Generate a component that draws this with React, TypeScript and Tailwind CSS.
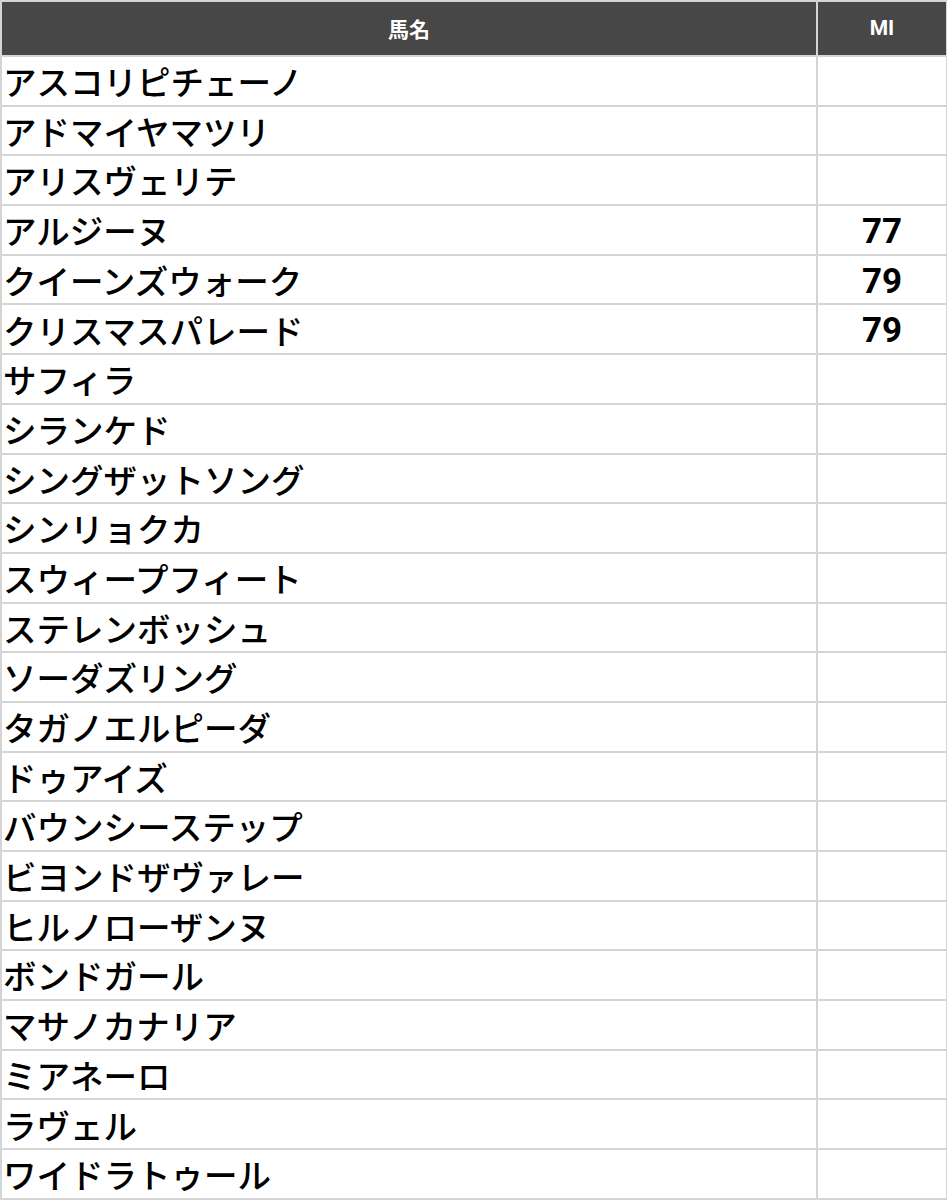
const rows: [string, string][] = [
  ["アスコリピチェーノ", ""],
  ["アドマイヤマツリ", ""],
  ["アリスヴェリテ", ""],
  ["アルジーヌ", "77"],
  ["クイーンズウォーク", "79"],
  ["クリスマスパレード", "79"],
  ["サフィラ", ""],
  ["シランケド", ""],
  ["シングザットソング", ""],
  ["シンリョクカ", ""],
  ["スウィープフィート", ""],
  ["ステレンボッシュ", ""],
  ["ソーダズリング", ""],
  ["タガノエルピーダ", ""],
  ["ドゥアイズ", ""],
  ["バウンシーステップ", ""],
  ["ビヨンドザヴァレー", ""],
  ["ヒルノローザンヌ", ""],
  ["ボンドガール", ""],
  ["マサノカナリア", ""],
  ["ミアネーロ", ""],
  ["ラヴェル", ""],
  ["ワイドラトゥール", ""],
];

export default function App() {
  return (
    <div className="w-[947px] bg-white font-[family-name:'Noto_Sans_CJK_JP',sans-serif]">
      <table className="w-[946px] table-fixed border-collapse">
        <colgroup>
          <col className="w-[816px]" />
          <col className="w-[130px]" />
        </colgroup>
        <thead>
          <tr className="h-[55px] bg-[#474747] text-white">
            <th className="border-2 border-[#d4d4d4] text-center text-[21px] font-bold">馬名</th>
            <th className="border-2 border-[#d4d4d4] text-center text-[21px] font-bold font-[family-name:Roboto,sans-serif]">MI</th>
          </tr>
        </thead>
        <tbody>
          {rows.map(([name, mi]) => (
            <tr key={name} className="h-[49.7px]">
              <td className="border-2 border-[#d4d4d4] pl-[1px] text-left text-[33.5px] font-medium leading-none text-black whitespace-nowrap">
                {name}
              </td>
              <td className="border-2 border-[#d4d4d4] pt-[3px] text-center text-[35px] font-bold leading-none text-black font-[family-name:Roboto,sans-serif]">
                {mi}
              </td>
            </tr>
          ))}
        </tbody>
      </table>
    </div>
  );
}
